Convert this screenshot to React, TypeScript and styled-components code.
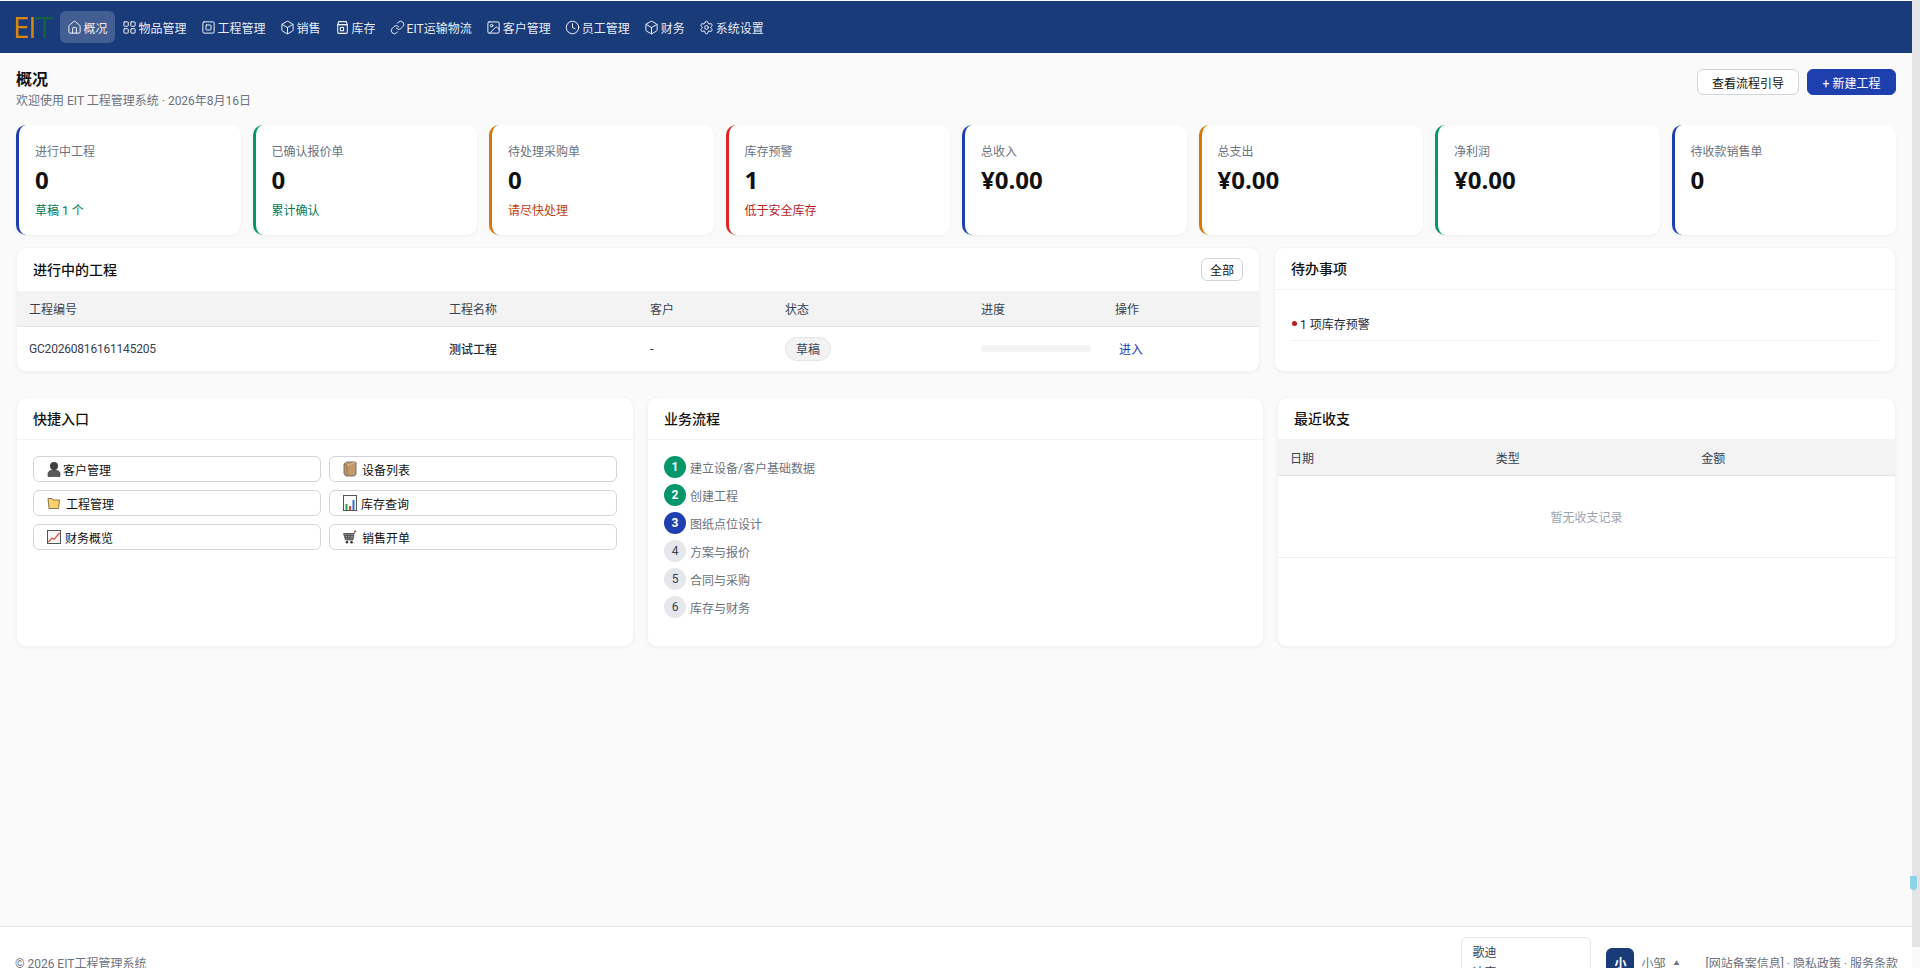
import React from 'react'
import styled, { createGlobalStyle } from 'styled-components'
import { Box, Clock, House, Image, LayoutGrid, Link, Settings, SquareSquare } from 'lucide-react'

const GlobalStyle = createGlobalStyle`
  html, body {
    margin: 0;
    padding: 0;
    height: 968px;
    overflow: hidden;
    background: #fafafa;
  }
  body {
    font-family: Roboto, 'Noto Sans CJK SC', sans-serif;
    font-size: 12px;
    color: #111827;
  }
  * { box-sizing: border-box; }
`

const Page = styled.div`
  padding-top: 1px;
  padding-right: 8px;
  background: #fafafa;
`

const Header = styled.header`
  display: flex;
  align-items: center;
  height: 52px;
  padding-left: 16px;
  background: #1a3b7a;
`

const Logo = styled.div`
  display: flex;
  align-items: center;
  width: 36px;
  margin-right: 8px;
  font-family: 'Open Sans', sans-serif;
  font-size: 30px;
  font-weight: 500;
  line-height: 52px;
  filter: blur(0.5px);
`

const LogoPart = styled.span<{ $color: string; $stretch?: number }>`
  display: inline-block;
  margin-left: ${(p) => (p.$stretch ? '0' : '-3px')};
  color: ${(p) => p.$color};
  letter-spacing: -1.5px;
  transform: scaleX(${(p) => p.$stretch ?? 1});
  transform-origin: left center;
`

const NavItem = styled.a<{ $active?: boolean }>`
  display: flex;
  align-items: center;
  gap: 3px;
  height: 32px;
  padding: 0 7.5px;
  border-radius: 6px;
  font-size: 12px;
  white-space: nowrap;
  color: rgba(255, 255, 255, 0.92);
  background: ${(p) => (p.$active ? 'rgba(255,255,255,0.18)' : 'transparent')};
  svg {
    width: 15px;
    height: 15px;
    margin: 0 -1px;
    flex: none;
  }
`

const Main = styled.main`
  min-height: 873px;
  padding: 16px 16px 0;
`

const PageHead = styled.div`
  display: flex;
  justify-content: space-between;
  height: 41px;
  margin-bottom: 15px;
`

const PageTitle = styled.h1`
  margin: 1px 0 0;
  font-size: 16px;
  line-height: 20px;
  font-weight: 700;
  color: #111;
`

const PageSub = styled.p`
  margin: 1px 0 0;
  font-size: 12px;
  line-height: 20px;
  color: #6b7280;
`

const Actions = styled.div`
  display: flex;
  gap: 8px;
  align-items: flex-start;
`

const Btn = styled.button<{ $primary?: boolean }>`
  height: 26px;
  padding: 0;
  width: ${(p) => (p.$primary ? '89px' : '102px')};
  border-radius: 6px;
  border: 1px solid ${(p) => (p.$primary ? '#1e40af' : '#d1d5db')};
  background: ${(p) => (p.$primary ? '#1e40af' : '#fff')};
  color: ${(p) => (p.$primary ? '#fff' : '#111')};
  font: inherit;
  font-size: 12px;
`

const KpiGrid = styled.section`
  display: grid;
  grid-template-columns: repeat(8, 1fr);
  gap: 12px;
  margin-bottom: 12px;
`

const Kpi = styled.div<{ $color: string }>`
  height: 110px;
  padding: 17px 16px 14px;
  background: #fff;
  border-left: 3px solid ${(p) => p.$color};
  border-radius: 10px;
  box-shadow: 0 1px 3px rgba(0, 0, 0, 0.05);
`

const KpiLabel = styled.div`
  font-size: 12px;
  line-height: 20px;
  color: #6b7280;
`

const KpiValue = styled.div`
  margin-top: 3px;
  font-family: 'Open Sans', sans-serif;
  font-size: 24px;
  line-height: 30px;
  font-weight: 700;
  color: #111;
`

const KpiSub = styled.div<{ $color: string }>`
  margin-top: 6px;
  font-size: 12px;
  line-height: 20px;
  color: ${(p) => p.$color};
`

const Row = styled.section<{ $cols: string; $gap: number; $mb?: number }>`
  display: grid;
  grid-template-columns: ${(p) => p.$cols};
  gap: ${(p) => p.$gap}px;
  margin-bottom: ${(p) => p.$mb ?? 0}px;
`

const Card = styled.div`
  background: #fff;
  border: 1px solid #f4f4f4;
  border-radius: 10px;
  box-shadow: 0 1px 3px rgba(0, 0, 0, 0.05);
  overflow: hidden;
`

const CardHead = styled.div<{ $bare?: boolean }>`
  display: flex;
  align-items: center;
  justify-content: space-between;
  height: ${(p) => (p.$bare ? '43px' : '42px')};
  padding: 0 16px;
  border-bottom: ${(p) => (p.$bare ? 'none' : '1px solid #f3f3f3')};
`

const CardTitle = styled.h3`
  margin: 0;
  font-size: 14px;
  line-height: 20px;
  font-weight: 500;
  color: #111;
`

const SmallBtn = styled.button`
  width: 42px;
  height: 23px;
  padding: 0;
  border: 1px solid #d1d5db;
  border-radius: 6px;
  background: #fff;
  font: inherit;
  font-size: 12px;
  color: #111;
`

const Table = styled.table`
  width: 100%;
  border-collapse: collapse;
  table-layout: fixed;
`

const Th = styled.th<{ $w?: number }>`
  width: ${(p) => (p.$w ? `${p.$w}px` : 'auto')};
  height: 35px;
  padding: 0 12px;
  text-align: left;
  font-size: 12px;
  font-weight: 400;
  color: #374151;
  background: #f3f3f3;
  border-bottom: 1px solid #e5e5e5;
`

const Td = styled.td<{ $strong?: boolean }>`
  height: 45px;
  padding: 0 12px;
  font-size: 12px;
  font-weight: ${(p) => (p.$strong ? 500 : 400)};
  color: #1f2937;
`

const CodeCell = styled(Td)`
  letter-spacing: -0.2px;
  color: #374151;
`

const EmptyCell = styled.td`
  height: 82px;
  text-align: center;
  font-size: 12px;
  color: #9ca3af;
  border-bottom: 1px solid #f0f0f0;
`

const Pill = styled.span`
  display: inline-flex;
  align-items: center;
  justify-content: center;
  width: 46px;
  height: 24px;
  border: 1px solid #e5e5e5;
  border-radius: 12px;
  background: #f3f3f3;
  color: #374151;
`

const Progress = styled.div`
  width: 110px;
  height: 7px;
  border-radius: 4px;
  background: #f3f3f3;
`

const EnterLink = styled.a`
  margin-left: 4px;
  color: #1e40af;
`

const CardBody = styled.div`
  padding: 16px;
`

const TodoItem = styled.div`
  display: flex;
  align-items: center;
  gap: 3px;
  height: 35px;
  border-bottom: 1px solid #f3f3f3;
  color: #1f2937;
`

const Dot = styled.span`
  width: 5px;
  height: 5px;
  margin-left: 1px;
  border-radius: 50%;
  background: #b91c1c;
`

const QuickGrid = styled.div`
  display: grid;
  grid-template-columns: 1fr 1fr;
  gap: 8px;
`

const QuickBtn = styled.button<{ $gap: number }>`
  display: flex;
  align-items: center;
  gap: ${(p) => p.$gap}px;
  height: 26px;
  padding: 0 13px;
  border: 1px solid #d1d5db;
  border-radius: 6px;
  background: #fff;
  font: inherit;
  font-size: 12px;
  color: #111;
  svg {
    width: 14px;
    height: auto;
    flex: none;
  }
`

const FlowList = styled.ol`
  display: flex;
  flex-direction: column;
  gap: 6px;
  margin: 0 0 12px;
  padding: 0;
  list-style: none;
`

const FlowItem = styled.li`
  display: flex;
  align-items: center;
  gap: 4px;
  color: #6b7280;
`

const StepNum = styled.span<{ $state: 'done' | 'current' | 'todo' }>`
  display: flex;
  align-items: center;
  justify-content: center;
  width: 22px;
  height: 22px;
  border-radius: 50%;
  font-size: 12px;
  font-weight: ${(p) => (p.$state === 'todo' ? 400 : 700)};
  color: ${(p) => (p.$state === 'todo' ? '#374151' : '#fff')};
  background: ${(p) => (p.$state === 'done' ? '#059669' : p.$state === 'current' ? '#1e40af' : '#e5e7eb')};
`

const Footer = styled.footer`
  display: flex;
  align-items: center;
  justify-content: space-between;
  padding: 10px 14px 10px 15px;
  background: #fff;
  border-top: 1px solid #e5e5e5;
  color: #6b7280;
`

const FooterRight = styled.div`
  display: flex;
  align-items: center;
`

const ChatBox = styled.div`
  width: 130px;
  height: 50px;
  padding: 5px 10px;
  margin-right: 15px;
  border: 1px solid #e5e7eb;
  border-radius: 6px;
  background: #fff;
  line-height: 20px;
  color: #374151;
`

const Avatar = styled.div`
  display: flex;
  align-items: center;
  justify-content: center;
  width: 28px;
  height: 28px;
  margin-right: 7px;
  border-radius: 6px;
  background: #1a3b7a;
  color: #fff;
  font-weight: 700;
`

const Caret = styled.span`
  margin: 0 26px 0 8px;
  font-size: 6px;
  color: #6b7280;
`

const ScrollTrack = styled.div`
  position: fixed;
  top: 0;
  right: 0;
  width: 8px;
  height: 947px;
  background: #e4e4e6;
`

const ScrollThumb = styled.div`
  position: absolute;
  top: 876px;
  left: -2px;
  width: 7px;
  height: 14px;
  border-radius: 0 0 4px 4px;
  background: #8dd5e6;
`

const InventoryIcon = () => (
  <svg viewBox="0 0 14 14" fill="none" stroke="currentColor" strokeWidth="1">
    <path d="M2.5 4.5h9v7a1 1 0 0 1-1 1h-7a1 1 0 0 1-1-1z" />
    <path d="M3.5 1.5h7l1 3h-9z" />
    <rect x="5" y="7" width="3" height="3" />
  </svg>
)

const PersonEmoji = () => (
  <svg viewBox="0 0 14 16">
    <circle cx="7" cy="5" r="4" fill="#3f3f3f" />
    <path d="M1 15.5v-3c0-2 2.5-3.5 6-3.5s6 1.5 6 3.5v3z" fill="#5a5a5a" stroke="#333" strokeWidth="0.6" />
  </svg>
)

const BoxEmoji = () => (
  <svg viewBox="0 0 14 16">
    <path d="M1 3l3-2h9v12.5l-2 1.5H3l-2-2z" fill="#c49a6c" stroke="#5c5c5c" strokeWidth="0.8" />
    <path d="M1 3l3 1.5V15" fill="none" stroke="#8a6a45" strokeWidth="0.8" />
    <path d="M4 4.5L13 1" fill="none" stroke="#e5c9a5" strokeWidth="0.8" />
  </svg>
)

const FolderEmoji = () => (
  <svg viewBox="0 0 14 14">
    <path d="M1 2.5h4l1 1.5h6.5l-1 8.5H2z" fill="#fdd26e" stroke="#6b5a2e" strokeWidth="0.8" />
  </svg>
)

const BarsEmoji = () => (
  <svg viewBox="0 0 14 16">
    <rect x="0.5" y="0.5" width="13" height="15" fill="#fafafa" stroke="#555" />
    <rect x="2.5" y="9" width="2" height="6" fill="#2e9e4f" />
    <rect x="6" y="11" width="2" height="4" fill="#e0452e" />
    <rect x="9.5" y="5" width="2" height="10" fill="#2f6fd6" />
  </svg>
)

const TrendEmoji = () => (
  <svg viewBox="0 0 14 14">
    <rect x="0.5" y="0.5" width="13" height="13" fill="#f4f4f4" stroke="#555" />
    <path d="M1.5 12L5 8l2 1.5L12.5 3" fill="none" stroke="#e0523a" strokeWidth="1.2" />
  </svg>
)

const CartEmoji = () => (
  <svg viewBox="0 0 14 14">
    <path d="M0.5 3.5h10.5l-1 6.5H2.5z" fill="#8a8a8a" stroke="#333" strokeWidth="0.7" />
    <path d="M1.2 5.5h9.4M1.8 7.8h8.4M4.3 3.5l.4 6.5M7.3 3.5l-.3 6.5" stroke="#333" strokeWidth="0.5" fill="none" />
    <path d="M11 3.5l1-2.5" stroke="#333" strokeWidth="0.9" />
    <circle cx="12.3" cy="1.2" r="1" fill="#d9534f" />
    <circle cx="4" cy="12.3" r="1.3" fill="#333" />
    <circle cx="8.5" cy="12.3" r="1.3" fill="#333" />
  </svg>
)

const navItems = [
  { label: '概况', icon: <House strokeWidth={1.6} />, active: true },
  { label: '物品管理', icon: <LayoutGrid strokeWidth={1.6} /> },
  { label: '工程管理', icon: <SquareSquare strokeWidth={1.6} /> },
  { label: '销售', icon: <Box strokeWidth={1.6} /> },
  { label: '库存', icon: <InventoryIcon /> },
  { label: 'EIT运输物流', icon: <Link strokeWidth={1.6} /> },
  { label: '客户管理', icon: <Image strokeWidth={1.6} /> },
  { label: '员工管理', icon: <Clock strokeWidth={1.6} /> },
  { label: '财务', icon: <Box strokeWidth={1.6} /> },
  { label: '系统设置', icon: <Settings strokeWidth={1.6} /> }
]

const kpis = [
  { label: '进行中工程', value: '0', sub: '草稿 1 个', color: '#1e40af', subColor: '#047857' },
  { label: '已确认报价单', value: '0', sub: '累计确认', color: '#059669', subColor: '#047857' },
  { label: '待处理采购单', value: '0', sub: '请尽快处理', color: '#d97706', subColor: '#c2410c' },
  { label: '库存预警', value: '1', sub: '低于安全库存', color: '#dc2626', subColor: '#b91c1c' },
  { label: '总收入', value: '¥0.00', color: '#1e40af' },
  { label: '总支出', value: '¥0.00', color: '#d97706' },
  { label: '净利润', value: '¥0.00', color: '#059669' },
  { label: '待收款销售单', value: '0', color: '#1e40af' }
]

const quickLinks = [
  { label: '客户管理', icon: <PersonEmoji />, gap: 2 },
  { label: '设备列表', icon: <BoxEmoji />, gap: 5 },
  { label: '工程管理', icon: <FolderEmoji />, gap: 5 },
  { label: '库存查询', icon: <BarsEmoji />, gap: 4 },
  { label: '财务概览', icon: <TrendEmoji />, gap: 4 },
  { label: '销售开单', icon: <CartEmoji />, gap: 5 }
]

const steps: { label: string; state: 'done' | 'current' | 'todo' }[] = [
  { label: '建立设备/客户基础数据', state: 'done' },
  { label: '创建工程', state: 'done' },
  { label: '图纸点位设计', state: 'current' },
  { label: '方案与报价', state: 'todo' },
  { label: '合同与采购', state: 'todo' },
  { label: '库存与财务', state: 'todo' }
]

const App: React.FC = () => {
  return (
    <Page>
      <GlobalStyle />
      <Header>
        <Logo>
          <LogoPart $color="#d9860f">EI</LogoPart>
          <LogoPart $color="#14603f" $stretch={1.15}>
            T
          </LogoPart>
        </Logo>
        {navItems.map((item) => (
          <NavItem key={item.label} $active={item.active}>
            {item.icon}
            {item.label}
          </NavItem>
        ))}
      </Header>

      <Main>
        <PageHead>
          <div>
            <PageTitle>概况</PageTitle>
            <PageSub>欢迎使用 EIT 工程管理系统 · 2026年8月16日</PageSub>
          </div>
          <Actions>
            <Btn>查看流程引导</Btn>
            <Btn $primary>+ 新建工程</Btn>
          </Actions>
        </PageHead>

        <KpiGrid>
          {kpis.map((kpi) => (
            <Kpi key={kpi.label} $color={kpi.color}>
              <KpiLabel>{kpi.label}</KpiLabel>
              <KpiValue>{kpi.value}</KpiValue>
              {kpi.sub && <KpiSub $color={kpi.subColor}>{kpi.sub}</KpiSub>}
            </Kpi>
          ))}
        </KpiGrid>

        <Row $cols="2fr 1fr" $gap={14} $mb={25}>
          <Card>
            <CardHead $bare>
              <CardTitle>进行中的工程</CardTitle>
              <SmallBtn>全部</SmallBtn>
            </CardHead>
            <Table>
              <thead>
                <tr>
                  <Th $w={420}>工程编号</Th>
                  <Th $w={201}>工程名称</Th>
                  <Th $w={135}>客户</Th>
                  <Th $w={196}>状态</Th>
                  <Th $w={134}>进度</Th>
                  <Th>操作</Th>
                </tr>
              </thead>
              <tbody>
                <tr>
                  <CodeCell>GC20260816161145205</CodeCell>
                  <Td $strong>测试工程</Td>
                  <Td>-</Td>
                  <Td>
                    <Pill>草稿</Pill>
                  </Td>
                  <Td>
                    <Progress />
                  </Td>
                  <Td>
                    <EnterLink>进入</EnterLink>
                  </Td>
                </tr>
              </tbody>
            </Table>
          </Card>
          <Card>
            <CardHead>
              <CardTitle>待办事项</CardTitle>
            </CardHead>
            <CardBody>
              <TodoItem>
                <Dot />1 项库存预警
              </TodoItem>
            </CardBody>
          </Card>
        </Row>

        <Row $cols="618px 617px 1fr" $gap={13}>
          <Card>
            <CardHead>
              <CardTitle>快捷入口</CardTitle>
            </CardHead>
            <CardBody>
              <QuickGrid>
                {quickLinks.map((link) => (
                  <QuickBtn key={link.label} $gap={link.gap}>
                    {link.icon}
                    {link.label}
                  </QuickBtn>
                ))}
              </QuickGrid>
            </CardBody>
          </Card>
          <Card>
            <CardHead>
              <CardTitle>业务流程</CardTitle>
            </CardHead>
            <CardBody>
              <FlowList>
                {steps.map((step, i) => (
                  <FlowItem key={step.label}>
                    <StepNum $state={step.state}>{i + 1}</StepNum>
                    {step.label}
                  </FlowItem>
                ))}
              </FlowList>
            </CardBody>
          </Card>
          <Card>
            <CardHead>
              <CardTitle>最近收支</CardTitle>
            </CardHead>
            <Table>
              <thead>
                <tr>
                  <Th>日期</Th>
                  <Th>类型</Th>
                  <Th>金额</Th>
                </tr>
              </thead>
              <tbody>
                <tr>
                  <EmptyCell colSpan={3}>暂无收支记录</EmptyCell>
                </tr>
              </tbody>
            </Table>
          </Card>
        </Row>
      </Main>

      <Footer>
        <span>© 2026 EIT工程管理系统</span>
        <FooterRight>
          <ChatBox>
            歌迪
            <br />
            迪克
          </ChatBox>
          <Avatar>小</Avatar>
          小邹
          <Caret>▲</Caret>
          [网站备案信息] · 隐私政策 · 服务条款
        </FooterRight>
      </Footer>

      <ScrollTrack>
        <ScrollThumb />
      </ScrollTrack>
    </Page>
  )
}

export default App
